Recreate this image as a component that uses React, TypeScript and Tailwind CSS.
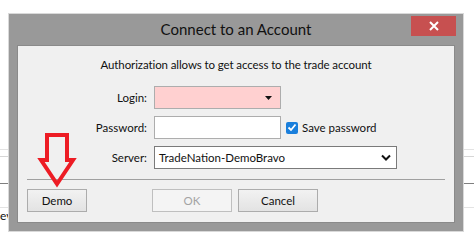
import React from 'react';

const font = { fontFamily: 'Lato, "Noto Sans", sans-serif' };

const Arrow = () => (
  <svg
    className="absolute left-[18px] top-[86px]"
    width="42"
    height="60"
    viewBox="0 0 42 60"
  >
    <path
      d="M11 3 H31 V28 H37 L21 52 L5 28 H11 Z"
      fill="none"
      stroke="#ed1c24"
      strokeWidth="4"
      strokeLinejoin="miter"
    />
  </svg>
);

const Button = ({ label, w, disabled }: { label: string; w: string; disabled?: boolean }) => (
  <button
    className={
      disabled
        ? `${w} h-[23px] border border-[#bfbfbf] bg-[#f4f4f4] text-[11.5px] text-[#a3a3a3]`
        : `${w} h-[23px] border border-[#acacac] bg-gradient-to-b from-[#f2f2f2] to-[#e3e3e3] text-[11.5px] text-[#111]`
    }
  >
    {label}
  </button>
);

const Row = ({ label, children }: { label: string; children: React.ReactNode }) => (
  <div className="flex h-[23px] items-center gap-[7px]">
    <div className="w-[129px] text-right text-[11.5px] text-[#111]">{label}</div>
    {children}
  </div>
);

const Dialog = () => (
  <div className="absolute left-[9px] top-[14px] flex h-[217px] w-[454px] flex-col bg-[#999999] shadow-[0_0_0_1px_#d9d9d9]">
    <div className="relative flex h-[31px] items-center justify-center">
      <span className="text-[15px] text-[#111]">Connect to an Account</span>
      <div className="absolute right-[7px] top-[2px] flex h-[20px] w-[45px] items-center justify-center bg-[#c75050]">
        <svg width="10" height="10" viewBox="0 0 10 10">
          <path d="M1 1 L9 9 M9 1 L1 9" stroke="#fff" strokeWidth="2" />
        </svg>
      </div>
    </div>
    <div className="relative mx-[8px] flex h-[178px] flex-col border border-[#8a8a8a] bg-[#f0f0f0]">
      <div className="pt-[11px] text-center text-[11.5px] leading-[16px] tracking-[-0.1px] text-[#111]">
        Authorization allows to get access to the trade account
      </div>
      <div className="mt-[13px] flex flex-col gap-[7px]">
        <Row label="Login:">
          <div className="flex h-[23px] w-[127px] items-center justify-end border border-[#adadad] bg-[#ffd0d0] pr-[8px]">
            <svg width="7" height="4" viewBox="0 0 7 4">
              <path d="M0 0 H7 L3.5 4 Z" fill="#111" />
            </svg>
          </div>
        </Row>
        <Row label="Password:">
          <div className="h-[23px] w-[127px] border border-[#adadad] bg-white" />
          <div className="ml-[-2px] flex items-center gap-[4px]">
            <div className="flex h-[12px] w-[12px] items-center justify-center rounded-[2px] bg-[#1a7fdc]">
              <svg width="10" height="9" viewBox="0 0 10 9">
                <path d="M1.5 4.5 L4 7 L8.5 1.5" fill="none" stroke="#fff" strokeWidth="1.8" />
              </svg>
            </div>
            <span className="text-[11.5px] text-[#111]">Save password</span>
          </div>
        </Row>
        <Row label="Server:">
          <div className="flex h-[23px] w-[243px] items-center justify-between border border-[#7a7a7a] bg-white pl-[4px] pr-[5px]">
            <span className="text-[11.5px] text-[#111]">TradeNation-DemoBravo</span>
            <svg width="10" height="7" viewBox="0 0 10 7">
              <path d="M1 1.5 L5 5.5 L9 1.5" fill="none" stroke="#111" strokeWidth="2" />
            </svg>
          </div>
        </Row>
      </div>
      <div className="mx-[9px] mt-[10px] h-px bg-[#a0a0a0]" />
      <div className="mt-[9px] flex items-center pl-[9px]">
        <Button label="Demo" w="w-[60px]" />
        <div className="ml-[65px] flex gap-[6px]">
          <Button label="OK" w="w-[80px]" disabled />
          <Button label="Cancel" w="w-[80px]" />
        </div>
      </div>
      <Arrow />
    </div>
  </div>
);

export default function App() {
  return (
    <div className="relative h-[244px] w-[474px] overflow-hidden bg-white" style={font}>
      <div className="flex flex-col">
        <div className="h-[150px] border-b border-[#e3e3e3]" />
        <div className="h-[7px] border-b border-[#d6d6d6]" />
        <div className="h-[27px] border-b border-[#7f7f7f]" />
        <div className="h-[24px] border-b border-[#e3e3e3]" />
        <div className="mt-[1px] text-[12px] leading-[14px] text-[#111]">ev.</div>
      </div>
      <Dialog />
    </div>
  );
}
